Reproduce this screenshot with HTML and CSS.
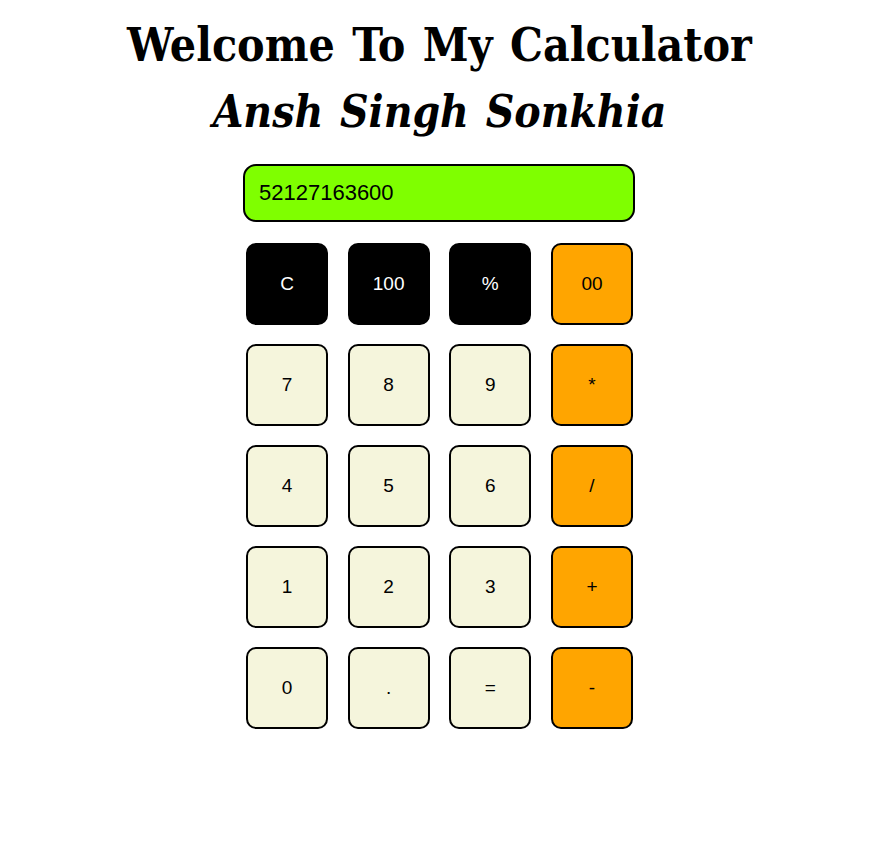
FILE: index.html
```html
<!DOCTYPE html>
<html>
<head>
<meta charset="utf-8">
<link rel="stylesheet" href="styles.css">
</head>
<body>
<div class="page">
  <h1 class="title">Welcome To My Calculator<br><i class="name">Ansh Singh Sonkhia</i></h1>
  <div class="calc">
    <div class="display">52127163600</div>
    <div class="keys">
      <button class="key dark">C</button>
      <button class="key dark">100</button>
      <button class="key dark">%</button>
      <button class="key op">00</button>
      <button class="key">7</button>
      <button class="key">8</button>
      <button class="key">9</button>
      <button class="key op">*</button>
      <button class="key">4</button>
      <button class="key">5</button>
      <button class="key">6</button>
      <button class="key op">/</button>
      <button class="key">1</button>
      <button class="key">2</button>
      <button class="key">3</button>
      <button class="key op">+</button>
      <button class="key">0</button>
      <button class="key">.</button>
      <button class="key">=</button>
      <button class="key op">-</button>
    </div>
  </div>
</div>
</body>
</html>
```
FILE: styles.css
```css
html, body { margin: 0; padding: 0; background: #fff; }
.page { width: 869px; padding-top: 12px; }
.title {
  margin: 0 0 0 10px;
  text-align: center;
  font-family: "DejaVu Serif Condensed", "DejaVu Serif", serif;
  font-stretch: condensed;
  font-weight: bold;
  font-size: 46px;
  line-height: 66px;
  height: 132px;
  color: #000;
  word-spacing: 3px;
}
.name { font-size: 44px; }
.calc { width: 392px; margin: 20px 0 0 243px; }
.display {
  box-sizing: border-box;
  height: 58px;
  border: 2px solid #000;
  border-radius: 13px;
  background: #7fff00;
  font-family: "Liberation Sans", Arial, sans-serif;
  font-size: 22px;
  line-height: 54px;
  padding-left: 14px;
  color: #000;
}
.keys {
  display: grid;
  grid-template-columns: repeat(4, 82px);
  column-gap: 19.67px;
  row-gap: 19px;
  margin: 21px 0 0 3px;
}
.key {
  box-sizing: border-box;
  width: 82px; height: 82px;
  border: 2px solid #000;
  border-radius: 10px;
  background: #f5f5dc;
  font-family: "Liberation Sans", Arial, sans-serif;
  font-size: 19px;
  color: #000;
  padding: 0;
}
.key.dark { background: #000; color: #fff; }
.key.op { background: #ffa500; }
```
